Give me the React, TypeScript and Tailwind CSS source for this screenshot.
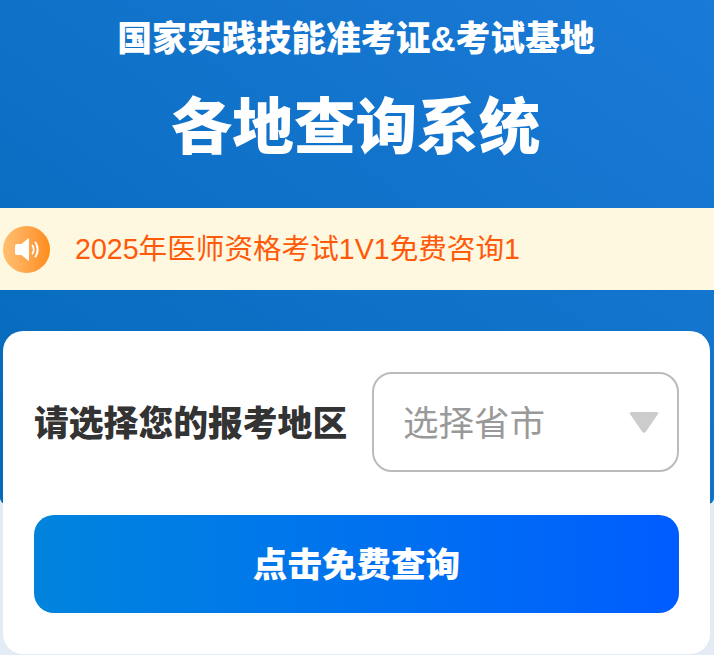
import React from "react";

const cjk = "font-['Liberation_Sans','Noto_Sans_CJK_SC',sans-serif]";

export default function App() {
  return (
    <div className={`relative w-[714px] h-[655px] overflow-hidden bg-[#e3ebf5] ${cjk}`}>
      <div className="h-[504px] rounded-b-[6px] bg-gradient-to-tr from-[#0369b9] to-[#1a7ad8] flex flex-col">
        <div className="pt-[17px] pr-[2px] text-center text-white font-black text-[34.8px] leading-[44px]">国家实践技能准考证&考试基地</div>
        <div className="mt-[31px] pr-[3px] text-center text-white font-black text-[61.6px] leading-[72px]">各地查询系统</div>
        <div className="mt-[44px] h-[82px] bg-[#fff8e1] flex items-center pl-[3px]">
          <div className="w-[47px] h-[47px] rounded-full bg-gradient-to-r from-[#ffc070] to-[#ff8c14]">
            <svg width="47" height="47" viewBox="0 0 47 47" fill="none">
              <path d="M12 20q0-2 2-2h4.500L25 12.500q1-.8 1 1v20q0 1.800-1 1L18.500 29H14q-2 0-2-2z" fill="#fff" />
              <path d="M29.500 19.500c1.500 2.500 1.500 5.500 0 8" stroke="#fff" strokeWidth="1.800" strokeLinecap="round" />
              <path d="M32.500 16.500c2.800 4.500 2.800 9.500 0 14" stroke="#fff" strokeWidth="2" strokeLinecap="round" />
            </svg>
          </div>
          <div className="ml-[25px] text-[28.6px] text-[#ff5a0a]">2025年医师资格考试1V1免费咨询1</div>
        </div>
      </div>
      <div className="absolute left-[3px] top-[331px] w-[707px] h-[323px] bg-white rounded-[20px] pl-[31px] pr-[31px] pt-[41px]">
        <div className="flex items-center justify-between">
          <div className="pt-[5px] text-[34.8px] font-black text-[#333]">请选择您的报考地区</div>
          <div className="w-[307px] h-[100px] border-2 border-[#bbb] rounded-[20px] flex items-center justify-between pl-[29px] pr-[18px]">
            <span className="pt-[6px] text-[35.5px] text-[#999]">选择省市</span>
            <svg width="30" height="23" viewBox="0 0 30 23"><path d="M2.500 1h25q2.500 0 1.500 2L17 20.500q-2 2.500-4 0L1 3Q0 1 2.500 1z" fill="#ccc" /></svg>
          </div>
        </div>
        <div className="mt-[43px] h-[98px] pt-[3px] rounded-[20px] bg-gradient-to-r from-[#0284dd] to-[#005cff] flex items-center justify-center text-white font-black text-[34.56px]">点击免费查询</div>
      </div>
    </div>
  );
}
